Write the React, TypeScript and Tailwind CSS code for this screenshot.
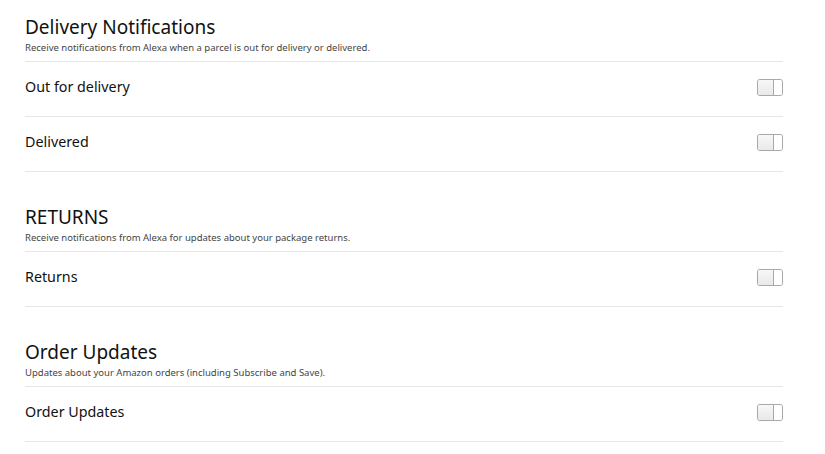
import React from "react";

function Toggle() {
  return (
    <div className="flex h-[17px] w-[26px] overflow-hidden rounded-[3px] border border-[#a9a9a9] bg-white shadow-[0_0_1px_rgba(0,0,0,0.1)]">
      <div className="flex-1 bg-gradient-to-b from-[#f7f7f7] to-[#e9e9e9]" />
      <div className="w-[9px] border-l border-[#a9a9a9] bg-white" />
    </div>
  );
}

function Row({ label }: { label: string }) {
  return (
    <div className="flex h-[55px] items-center justify-between border-b border-[#e7e7e7] pb-[4px]">
      <span className="text-[14.3px] leading-[20px] text-[#111]">{label}</span>
      <Toggle />
    </div>
  );
}

function Section({
  title,
  subtitle,
  rows,
  first,
}: {
  title: string;
  subtitle: string;
  rows: string[];
  first?: boolean;
}) {
  return (
    <section className={first ? "pt-[13px]" : "pt-[31px]"}>
      <h2 className="text-[19px] leading-[28px] text-[#111]">{title}</h2>
      <p className="pb-[6px] text-[9.5px] leading-[14px] text-[#444]">{subtitle}</p>
      <div className="border-t border-[#e7e7e7]">
        {rows.map((r) => (
          <Row key={r} label={r} />
        ))}
      </div>
    </section>
  );
}

export default function App() {
  return (
    <div
      className="h-[454px] w-[825px] overflow-hidden bg-white pl-[25px] pr-[42px]"
      style={{ fontFamily: '"Noto Sans", "Open Sans", sans-serif' }}
    >
      <Section
        first
        title="Delivery Notifications"
        subtitle="Receive notifications from Alexa when a parcel is out for delivery or delivered."
        rows={["Out for delivery", "Delivered"]}
      />
      <Section
        title="RETURNS"
        subtitle="Receive notifications from Alexa for updates about your package returns."
        rows={["Returns"]}
      />
      <Section
        title="Order Updates"
        subtitle="Updates about your Amazon orders (including Subscribe and Save)."
        rows={["Order Updates"]}
      />
    </div>
  );
}
